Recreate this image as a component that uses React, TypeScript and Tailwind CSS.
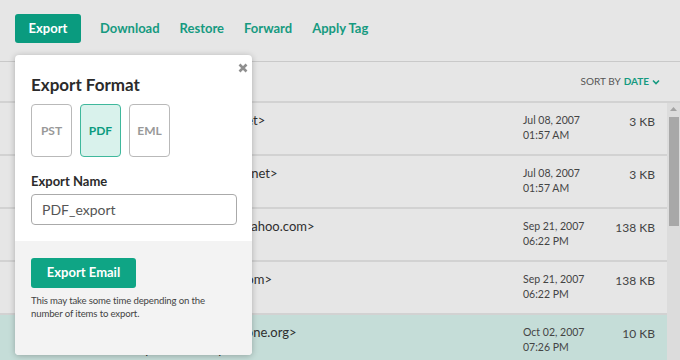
import React from 'react';

const rows = [
  { from: 'Mark Dawson', email: 'mdaw@aol.net', subject: 'Budget', date: 'Jul 08, 2007', time: '01:57 AM', size: '3 KB' },
  { from: 'Mark Dawson', email: 'mdawes@aol.net', subject: 'Budget', date: 'Jul 08, 2007', time: '01:57 AM', size: '3 KB' },
  { from: 'Kevin Holt', email: 'kevin.holtman@yahoo.com', subject: 'Schedule', date: 'Sep 21, 2007', time: '06:22 PM', size: '138 KB' },
  { from: 'Kevin Holt', email: 'kevin.holt@aol.com', subject: 'Schedule', date: 'Sep 21, 2007', time: '06:22 PM', size: '138 KB' },
  { from: 'Lindsay Sherman', email: 'lindsays@one.org', subject: 'RE: Call to plan next steps?', date: 'Oct 02, 2007', time: '07:26 PM', size: '10 KB', selected: true },
];

export default function App() {
  return (
    <div
      className="relative w-[680px] h-[360px] overflow-hidden bg-[#e6e6e6] text-[#333]"
      style={{ fontFamily: 'Lato, "Open Sans", sans-serif' }}
    >
      {/* TOOLBAR */}
      <div className="flex items-start h-[62px] pl-[15px] pt-[14px] border-b border-[#c9c9c9]">
        <button className="h-[29px] w-[66px] rounded-[3px] bg-[#0a9b7f] text-white text-[13px] font-bold">
          Export
        </button>
        <div className="flex gap-[20px] ml-[19px] mt-[5px] text-[13px] font-bold text-[#169a80]">
          <span>Download</span>
          <span>Restore</span>
          <span>Forward</span>
          <span>Apply Tag</span>
        </div>
      </div>

      {/* SORT HEADER */}
      <div className="flex justify-end items-center h-[41px] pr-[20px] border-b-2 border-[#d2d2d2] text-[10px]">
        <span className="text-[#555]">SORT BY</span>
        <span className="ml-[3px] font-bold text-[#169a80]">DATE</span>
        <svg width="8" height="6" viewBox="0 0 8 6" className="ml-[3px]">
          <path d="M1 1.5 L4 4.5 L7 1.5" stroke="#169a80" strokeWidth="1.6" fill="none" />
        </svg>
      </div>

      {/* LIST */}
      <div className="flex">
        <div className="flex-1">
          {rows.map((r, i) => (
            <div
              key={i}
              className={`flex h-[53px] border-b-2 border-[#d2d2d2] ${r.selected ? 'bg-[#c5ddd8]' : ''}`}
            >
              <div className="w-[66px] pl-[17px] pt-[19px]">
                <div className={`w-[14px] h-[14px] rounded-[2px] flex items-center justify-center ${r.selected ? 'bg-[#0a9b7f]' : 'bg-white border border-[#aaa]'}`}>
                  {r.selected && (
                    <svg width="10" height="8" viewBox="0 0 10 8">
                      <path d="M1 4 L3.8 6.6 L9 1.4" stroke="white" strokeWidth="2" fill="none" />
                    </svg>
                  )}
                </div>
              </div>
              <div className="w-[457px] pl-[17px] pt-[9px] text-[13px] leading-[17px] text-[#2f2f2f]">
                <div>
                  {r.from} &lt;{r.email}&gt;
                </div>
                <div>{r.subject}</div>
              </div>
              <div className="w-[72px] pt-[10px] text-[10.5px] leading-[15px] text-[#444] whitespace-nowrap">
                <div>{r.date}</div>
                <div>{r.time}</div>
              </div>
              <div className="flex-1 pr-[12px] pt-[10px] text-right text-[12px] text-[#444] whitespace-nowrap">{r.size}</div>
            </div>
          ))}
        </div>
        {/* SCROLLBAR */}
        <div className="w-[13px] h-[260px] bg-[#dcdcdc] flex flex-col items-center pt-[4px]">
          <svg width="7" height="4" viewBox="0 0 7 4">
            <path d="M0 4 L3.5 0 L7 4 Z" fill="#a3a3a3" />
          </svg>
          <div className="mt-[6px] w-[10px] h-[109px] bg-[#a8a8a8]" />
        </div>
      </div>

      {/* EXPORT POPOVER */}
      <div className="absolute left-[15px] top-[55px] w-[237px] h-[300px] bg-white rounded-[4px] shadow-[0_1px_6px_rgba(0,0,0,0.25)] overflow-hidden flex flex-col">
        <svg width="10" height="10" viewBox="0 0 10 10" className="absolute right-[4px] top-[8px]">
          <path d="M1.5 1.5 L8.5 8.5 M8.5 1.5 L1.5 8.5" stroke="#8f8f8f" strokeWidth="2.6" />
        </svg>
        <div className="px-[16px] pt-[18px] pb-[16px]">
          <div className="text-[17px] font-bold text-[#2b2b2b] leading-[24px]">Export Format</div>
          <div className="flex gap-[8px] mt-[7px]">
            <div className="w-[41px] h-[53px] rounded-[4px] border border-[#b9b9b9] flex items-center justify-center text-[12px] font-bold text-[#999]">
              PST
            </div>
            <div className="w-[41px] h-[53px] rounded-[4px] border border-[#3fb89c] bg-[#d9f2ec] flex items-center justify-center text-[12px] font-bold text-[#0a9b7f]">
              PDF
            </div>
            <div className="w-[41px] h-[53px] rounded-[4px] border border-[#b9b9b9] flex items-center justify-center text-[12px] font-bold text-[#999]">
              EML
            </div>
          </div>
          <div className="mt-[15px] text-[13px] font-bold text-[#2b2b2b] leading-[18px]">Export Name</div>
          <div className="mt-[4px] h-[31px] w-[206px] rounded-[4px] border border-[#aaa] flex items-center pl-[10px] text-[14px] text-[#555]">
            PDF_export
          </div>
        </div>
        <div className="flex-1 bg-[#f3f3f3] px-[16px] pt-[17px]">
          <button className="h-[30px] w-[105px] rounded-[3px] bg-[#0fa585] text-white text-[13px] font-bold">
            Export Email
          </button>
          <div className="mt-[6px] text-[9.6px] leading-[13px] tracking-[-0.15px] text-[#444]">
            This may take some time depending on the number of items to export.
          </div>
        </div>
      </div>
    </div>
  );
}
